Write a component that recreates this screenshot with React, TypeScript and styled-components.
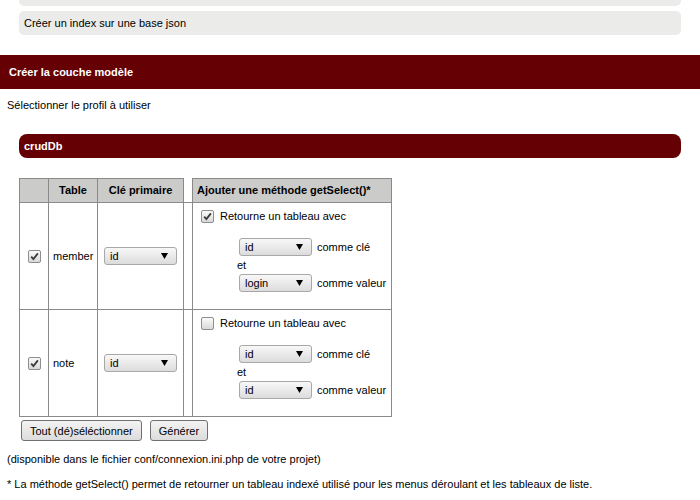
import React from "react";
import styled, { createGlobalStyle } from "styled-components";

const GlobalStyle = createGlobalStyle`
  html, body { margin: 0; padding: 0; background: #ffffff; }
  body {
    font-family: "Liberation Sans", Arial, sans-serif;
    font-size: 11px;
    color: #000000;
    overflow: hidden;
  }
`;

const Page = styled.div`
  width: 700px;
  height: 500px;
  overflow: hidden;
`;

const TopList = styled.div`
  display: flex;
  flex-direction: column;
  gap: 5px;
  margin: -18px 19px 0;
`;

const ListItem = styled.div`
  height: 24px;
  box-sizing: border-box;
  padding: 0 5px;
  display: flex;
  align-items: center;
  background: #ebece9;
  border-radius: 5px;
  line-height: 13px;
`;

const SectionHeader = styled.div`
  margin-top: 20px;
  height: 34px;
  background: #650004;
  color: #ffffff;
  font-weight: bold;
  padding-left: 9px;
  display: flex;
  align-items: center;
`;

const Para = styled.p<{ $top: number }>`
  margin: ${(p) => p.$top}px 7px 0;
  line-height: 13px;
`;

const ProfileBar = styled.div`
  margin: 22px 19px 0;
  height: 24px;
  border-radius: 8px;
  background: #650004;
  color: #ffffff;
  font-weight: bold;
  padding-left: 5px;
  display: flex;
  align-items: center;
`;

const TableWrap = styled.div`
  margin: 20px 19px 0;
`;

const Grid = styled.table`
  border-collapse: collapse;
  table-layout: fixed;
  width: 372px;
`;

const Th = styled.th<{ $align?: string }>`
  height: 23px;
  padding: 0 4px;
  background: #cbccc9;
  border: 1px solid #8a8a8a;
  font-weight: bold;
  text-align: ${(p) => p.$align || "center"};
  line-height: 13px;
`;

const SpacerTh = styled.th`
  background: #ffffff;
  border-left: 1px solid #8a8a8a;
  border-right: 1px solid #8a8a8a;
  border-top-style: hidden;
  border-bottom: 1px solid #8a8a8a;
  padding: 0;
`;

const Td = styled.td<{ $center?: boolean }>`
  border: 1px solid #8a8a8a;
  padding: 4px;
  vertical-align: middle;
  text-align: ${(p) => (p.$center ? "center" : "left")};
  line-height: 13px;
`;

const SpacerTd = styled.td`
  border: 1px solid #8a8a8a;
  padding: 0;
`;

const MethodTd = styled.td`
  border: 1px solid #8a8a8a;
  padding: 4px;
  vertical-align: top;
  line-height: 13px;
`;

const CheckBoxBox = styled.span<{ $margin?: string }>`
  display: inline-flex;
  align-items: center;
  justify-content: center;
  width: 13px;
  height: 13px;
  box-sizing: border-box;
  border: 1px solid #8e8e8e;
  border-radius: 2px;
  background: linear-gradient(#fafafa, #d9d9d9);
  vertical-align: middle;
  margin: ${(p) => p.$margin || "0"};
`;

const CheckBox = ({ checked, margin }: { checked: boolean; margin?: string }) => (
  <CheckBoxBox $margin={margin}>
    {checked && (
      <svg width="11" height="11" viewBox="0 0 11 11">
        <path d="M2.2 5.6 L4.4 8 L8.9 2.4" fill="none" stroke="#3a3a3a" strokeWidth="1.8" />
      </svg>
    )}
  </CheckBoxBox>
);

const SelectBox = styled.span<{ $ml?: number }>`
  display: inline-flex;
  align-items: center;
  justify-content: space-between;
  width: 73px;
  height: 18px;
  box-sizing: border-box;
  border: 1px solid #a8a8a8;
  border-radius: 3px;
  background: linear-gradient(#f8f8f8, #dcdcdc);
  padding: 0 8px 0 5px;
  margin-left: ${(p) => p.$ml ?? 2}px;
  vertical-align: middle;
  font-size: 11px;
`;

const Select = ({ value }: { value: string }) => (
  <SelectBox>
    <span>{value}</span>
    <svg width="7" height="6" viewBox="0 0 7 6">
      <path d="M0 0 H7 L3.5 6 Z" fill="#000" />
    </svg>
  </SelectBox>
);

const CheckLine = styled.div`
  height: 18px;
  display: flex;
  align-items: center;
`;

const CheckLabel = styled.span`
  margin-left: 6px;
`;

const KeyBlock = styled.div`
  margin: 13px 0 13px 40px;
`;

const KeyLine = styled.div`
  height: 18px;
  display: flex;
  align-items: center;
`;

const KeyLabel = styled.span`
  margin-left: 5px;
`;

const ButtonRow = styled.div`
  display: flex;
  gap: 8px;
  margin-top: 3px;
  padding-left: 2px;
`;

const Button = styled.button`
  height: 21px;
  box-sizing: border-box;
  padding: 0 8px;
  border: 1px solid #707070;
  border-radius: 3px;
  background: linear-gradient(#f3f3f3, #dcdcdc);
  font-family: "Liberation Sans", Arial, sans-serif;
  font-size: 11px;
  color: #000;
  margin: 0;
`;

type Row = { table: string; pk: string; getSelect: boolean; key: string; value: string };

const rows: Row[] = [
  { table: "member", pk: "id", getSelect: true, key: "id", value: "login" },
  { table: "note", pk: "id", getSelect: false, key: "id", value: "id" },
];

export default function App() {
  return (
    <Page>
      <GlobalStyle />
      <TopList>
        <ListItem>Créer la couche de présentation</ListItem>
        <ListItem>Créer un index sur une base json</ListItem>
      </TopList>
      <SectionHeader>Créer la couche modèle</SectionHeader>
      <Para $top={10}>Sélectionner le profil à utiliser</Para>
      <ProfileBar>crudDb</ProfileBar>
      <TableWrap>
        <Grid>
          <colgroup>
            <col style={{ width: 29 }} />
            <col style={{ width: 49 }} />
            <col style={{ width: 86 }} />
            <col style={{ width: 9 }} />
            <col style={{ width: 199 }} />
          </colgroup>
          <thead>
            <tr>
              <Th />
              <Th>Table</Th>
              <Th>Clé primaire</Th>
              <SpacerTh />
              <Th $align="left">Ajouter une méthode getSelect()*</Th>
            </tr>
          </thead>
          <tbody>
            {rows.map((r) => (
              <tr key={r.table}>
                <Td $center>
                  <CheckBox checked />
                </Td>
                <Td>{r.table}</Td>
                <Td>
                  <Select value={r.pk} />
                </Td>
                <SpacerTd />
                <MethodTd>
                  <CheckLine>
                    <CheckBox checked={r.getSelect} margin="0 0 0 4px" />
                    <CheckLabel>Retourne un tableau avec</CheckLabel>
                  </CheckLine>
                  <KeyBlock>
                    <KeyLine>
                      <Select value={r.key} />
                      <KeyLabel>comme clé</KeyLabel>
                    </KeyLine>
                    <KeyLine>et</KeyLine>
                    <KeyLine>
                      <Select value={r.value} />
                      <KeyLabel>comme valeur</KeyLabel>
                    </KeyLine>
                  </KeyBlock>
                </MethodTd>
              </tr>
            ))}
          </tbody>
        </Grid>
        <ButtonRow>
          <Button>Tout (dé)séléctionner</Button>
          <Button>Générer</Button>
        </ButtonRow>
      </TableWrap>
      <Para $top={12}>(disponible dans le fichier conf/connexion.ini.php de votre projet)</Para>
      <Para $top={12}>
        * La méthode getSelect() permet de retourner un tableau indexé utilisé pour les menus déroulant et les tableaux de liste.
      </Para>
    </Page>
  );
}
